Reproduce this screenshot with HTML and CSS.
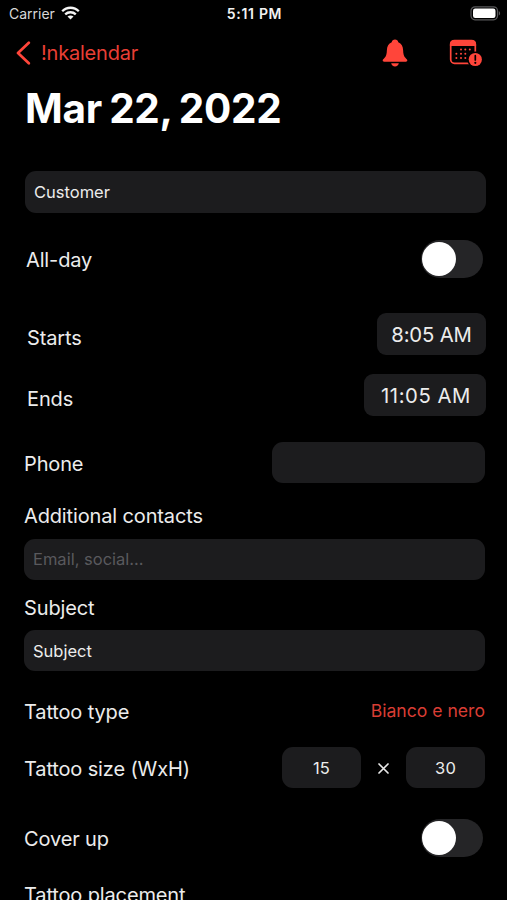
FILE: index.html
```html
<!DOCTYPE html>
<html lang="en">
<head>
<meta charset="utf-8">
<title>Appointment</title>
<link rel="stylesheet" href="styles.css">
</head>
<body>
<main class="screen">
  <header class="status">
    <div class="carrier"><span>Carrier</span>
      <svg class="wifi" width="19" height="14" viewBox="0 0 19 14" fill="none" stroke="#f5f5f5" stroke-width="2.300"><path d="M1.200 5.200C5.800.6 13.200.6 17.800 5.200"/><path d="M4.200 8.400c3-2.900 7.600-2.900 10.600 0"/><path d="M9.500 13.600 6.500 10.600c1.700-1.600 4.300-1.600 6 0z" fill="#f5f5f5" stroke="none"/></svg>
    </div>
    <div class="clock">5:11 PM</div>
    <svg class="battery" width="31" height="15" viewBox="0 0 31 15"><rect x="1" y=".8" width="26.500" height="13" rx="4" fill="none" stroke="#58585a" stroke-width="1.200"/><rect x="3" y="2.600" width="22.500" height="9.400" rx="2.200" fill="#fff"/><path d="M28.800 5v4.600c1.800-.8 1.800-3.800 0-4.600z" fill="#58585a"/></svg>
  </header>
  <nav class="nav">
    <a class="back"><svg width="15" height="24" viewBox="0 0 15 24" fill="none" stroke="#ff453a" stroke-width="2.700" stroke-linecap="round" stroke-linejoin="round"><path d="M12.800 1.700 2 12l10.800 10.300"/></svg><span>!nkalendar</span></a>
    <div class="actions">
      <svg width="26" height="28" viewBox="0 0 26 28" fill="#ff453a"><path d="M13 .5c-1.800 0-3 1.100-3.300 2.700C6.500 4.300 5 7.200 4.900 11c-.1 4.300-.8 6.200-2.500 8.100-.8.900-1.700 1.500-1.700 2.400 0 .7.500 1.200 1.400 1.200h21.800c.9 0 1.400-.5 1.400-1.200 0-.9-.9-1.500-1.700-2.400-1.700-1.900-2.400-3.800-2.500-8.100-.1-3.800-1.600-6.700-4.800-7.800C16 1.600 14.800.5 13 .5z"/><path d="M9.200 24.200h7.600c-.3 2-1.800 3.200-3.800 3.200s-3.500-1.200-3.800-3.200z"/></svg>
      <svg width="33" height="28" viewBox="0 0 33 28"><rect x="1.700" y="1.700" width="24.600" height="22.600" rx="3.800" fill="none" stroke="#ff453a" stroke-width="1.700"/><path d="M.9 7V4.800C.9 2.300 2.400.9 4.800.9h18.400c2.400 0 3.900 1.400 3.900 3.900V7z" fill="#ff453a"/><g fill="#ff453a"><circle cx="12" cy="10.500" r="1"/><circle cx="16.300" cy="10.500" r="1"/><circle cx="20.800" cy="10.500" r="1"/><circle cx="7.400" cy="14.700" r="1"/><circle cx="12" cy="14.700" r="1"/><circle cx="16.300" cy="14.700" r="1"/><circle cx="7.400" cy="19" r="1"/><circle cx="12" cy="19" r="1"/><circle cx="16.300" cy="19" r="1"/></g><circle cx="26.300" cy="20.500" r="8" fill="#000"/><circle cx="26.300" cy="20.500" r="6.600" fill="#ff453a"/><path d="M26.300 16.700v4.300" stroke="#000" stroke-width="1.700" stroke-linecap="round"/><circle cx="26.300" cy="23.800" r="1.100"/></svg>
    </div>
  </nav>
  <h1 class="title">Mar 22, 2022</h1>
  <div class="field customer">Customer</div>
  <div class="row allday"><span class="label">All-day</span><span class="toggle"></span></div>
  <div class="row starts"><span class="label">Starts</span><span class="time">8:05 AM</span></div>
  <div class="row ends"><span class="label">Ends</span><span class="time late">11:05 AM</span></div>
  <div class="row phone"><span class="label">Phone</span><span class="field number"></span></div>
  <div class="label head contacts">Additional contacts</div>
  <div class="field"><span class="placeholder">Email, social...</span></div>
  <div class="label head subject">Subject</div>
  <div class="field subject-field">Subject</div>
  <div class="row type"><span class="label">Tattoo type</span><span class="value">Bianco e nero</span></div>
  <div class="row size"><span class="label">Tattoo size (WxH)</span><span class="dims"><span class="field dim">15</span><span class="times"><svg width="11" height="11" viewBox="0 0 11 11" stroke="#e8e8e8" stroke-width="1.700" stroke-linecap="round"><path d="m1 1 9 9M10 1 1 10"/></svg></span><span class="field dim">30</span></span></div>
  <div class="row cover"><span class="label">Cover up</span><span class="toggle"></span></div>
  <div class="label head placement">Tattoo placement</div>
</main>
</body>
</html>
```
FILE: styles.css
```css
* { box-sizing: border-box; }
html, body { margin: 0; background: #000; overflow: hidden; }
body { font-family: Inter, "Liberation Sans", sans-serif; color: #ececec; }
.screen { width: 507px; height: 900px; overflow: hidden; padding: 0 22px 0 24px; white-space: nowrap; }
.status { height: 28px; margin: 0 -16px 0 -15px; display: grid; grid-template-columns: 1fr auto 1fr; align-items: center; font-size: 14px; }
.carrier { display: flex; align-items: center; gap: 6px; color: #d8d8d8; margin-top: -2px; }
.wifi { margin-top: -1px; }
.clock { font-weight: 600; color: #f2f2f2; letter-spacing: 0.7px; margin: -2px 0 0 -1px; }
.battery { justify-self: end; margin-top: -2px; }
.nav { height: 48px; display: flex; justify-content: space-between; align-items: center; color: #ff453a; }
.back { display: flex; align-items: center; gap: 10px; margin-left: -8px; padding-top: 1px; font-size: 20px; color: #e93f35; letter-spacing: -0.2px; }
.actions { display: flex; align-items: center; gap: 41px; padding: 2px 3px 0 0; }
.title { margin: 9px 0 0 1px; height: 48px; line-height: 48px; font-size: 40.5px; font-weight: 650; color: #fff; letter-spacing: -0.3px; word-spacing: -2px; }
.field { height: 41px; border-radius: 11px; background: #1c1c1e; display: flex; align-items: center; padding: 0 9px; font-size: 16.5px; }
.customer { height: 42px; margin: 37.5px -1px 0 1px; }
.row { display: flex; align-items: center; justify-content: space-between; height: 42px; }
.label { font-size: 20px; letter-spacing: -0.14px; }
.toggle { width: 62px; height: 38px; border-radius: 19px; background: #252527; padding: 2px 1px; margin-right: 2px; }
.toggle::before { content: ""; display: block; width: 34px; height: 34px; border-radius: 50%; background: #fff; }
.allday { margin-top: 25.5px; padding-left: 2px; }
.allday .label { padding-top: 1px; }
.starts { margin: 33px -1px 0 3px; }
.ends { margin: 19px -1px 0 3px; }
.starts .label, .ends .label { padding-top: 7px; }
.time { width: 109px; height: 42px; border-radius: 9px; background: #1c1c1e; display: flex; align-items: center; justify-content: center; font-size: 20.3px; letter-spacing: -0.15px; }
.late { width: 122px; letter-spacing: 0.55px; padding-left: 2px; }
.phone { margin-top: 25px; }
.phone .label { padding-top: 3px; }
.number { width: 213px; }
.head { height: 30px; line-height: 30px; }
.contacts { margin-top: 18px; }
.contacts + .field { margin-top: 7.5px; }
.placeholder { color: #59595d; }
.subject { margin-top: 13.5px; }
.subject-field { margin-top: 7px; }
.type { margin-top: 20px; }
.value { color: #d93d34; font-size: 17.6px; padding-bottom: 3px; }
.size { margin-top: 13.5px; }
.size .label { padding-top: 3px; }
.cover .label { padding-top: 1px; }
.dims { display: flex; align-items: center; }
.dim { width: 79px; justify-content: center; letter-spacing: 0.2px; }
.times { width: 45px; display: flex; justify-content: center; padding-top: 2px; }
.cover { margin-top: 28.5px; }
.placement { margin-top: 20.5px; }
```
